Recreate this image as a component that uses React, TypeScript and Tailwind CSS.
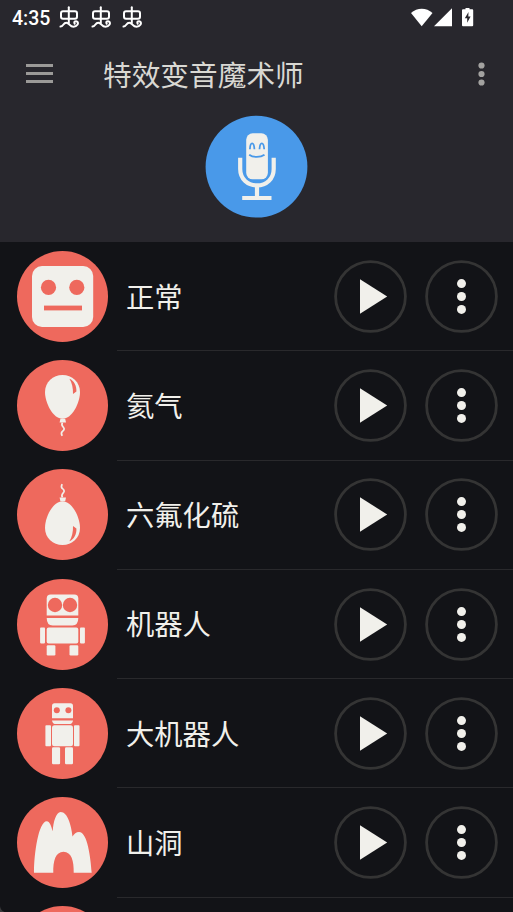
import type { ReactNode } from "react";

const CREAM = "#f1f0eb";
const CORAL = "#ee695d";

function Disc({ children }: { children?: ReactNode }) {
  return (
    <svg viewBox="0 0 91 91" className="mb-[0.5px] h-[91px] w-[91px] shrink-0">
      <circle cx="45.5" cy="45.5" r="45.5" fill={CORAL} />
      <g fill={CREAM}>{children}</g>
    </svg>
  );
}

function Face() {
  return (
    <>
      <rect x="15" y="15" width="61.2" height="61" rx="10" />
      <g fill={CORAL}>
        <circle cx="31.5" cy="36.4" r="7.6" />
        <circle cx="59.8" cy="36.4" r="7.6" />
        <rect x="27" y="54.6" width="38" height="4.8" />
      </g>
    </>
  );
}

function Balloon() {
  return (
    <>
      <path d="M45.5 15C55 15 63 22 63 32C63 43 55 58.8 45.5 58.8C36 58.8 28 43 28 32C28 22 36 15 45.5 15Z" />
      <path d="M52.4 18.8C57 20.5 59.8 26 59.4 31.6L56 34C56.2 28 55 23 52.4 18.8Z" fill={CORAL} />
      <path d="M43.4 58.8H48.2L49 62.6H42.6Z" />
      <path d="M45.4 62.6C44 65 45 65.8 46.4 67.3C48 69.2 46.8 70.4 45.2 71.6C43.8 73 44.2 74 45.2 75.8" fill="none" stroke={CREAM} strokeWidth="1.7" />
    </>
  );
}

function HeavyBalloon() {
  return (
    <g transform="matrix(1 0 0 -1 0 91)">
      <Balloon />
    </g>
  );
}

function Robot() {
  return (
    <>
      <path d="M33.7 15.4H57.3Q61.3 15.4 61.3 19.4V36.4H29.7V19.4Q29.7 15.4 33.7 15.4Z" />
      <circle cx="38" cy="26" r="7.2" fill={CORAL} />
      <circle cx="53" cy="26" r="7.2" fill={CORAL} />
      <path d="M29.7 39H61.3Q61.3 46.4 55.3 46.4H35.7Q29.7 46.4 29.7 39Z" />
      <rect x="29.7" y="48.6" width="31.6" height="16" rx="2" />
      <rect x="23.1" y="48.6" width="4.9" height="15.8" rx="0.8" />
      <rect x="63" y="48.6" width="4.9" height="15.8" rx="0.8" />
      <rect x="29.7" y="66.2" width="8.7" height="10.2" rx="1.2" />
      <rect x="52.5" y="66.2" width="8.8" height="10.2" rx="1.2" />
    </>
  );
}

function BigRobot() {
  return (
    <>
      <path d="M37.5 15.2H53.5Q56 15.2 56 17.7V30.2H35V17.7Q35 15.2 37.5 15.2Z" />
      <circle cx="39.8" cy="22.3" r="3" fill={CORAL} />
      <circle cx="51.4" cy="22.3" r="3" fill={CORAL} />
      <path d="M35 32.4H56Q55.5 36 52 36H39Q35.5 36 35 32.4Z" />
      <rect x="35" y="37.2" width="21" height="21" rx="2.5" />
      <rect x="28.4" y="37.2" width="5.6" height="21" rx="0.9" />
      <rect x="57" y="37.2" width="5.5" height="21" rx="0.9" />
      <rect x="35" y="59.2" width="8.1" height="17" rx="1.2" />
      <rect x="48" y="59.2" width="8" height="17" rx="1.2" />
    </>
  );
}

function Cave() {
  return (
    <path d="M17 75.7C17 57 21.5 24.2 29.8 24.2C32.5 24.2 34.3 29 35.7 34.3C36.3 25 39 15 43.7 15C50.5 15 54.3 28 55.5 39.4C57 37 59.3 35 62 35C70.5 35 73.5 60 74.7 75.7H56.7C57 64 54.5 54.7 46.5 54.7C38.5 54.7 36 64 36.3 75.7Z" />
  );
}

function PlayButton() {
  return (
    <button className="h-[73px] w-[73px] shrink-0">
      <svg viewBox="0 0 73 73" className="block h-full w-full">
        <circle cx="36.5" cy="36.5" r="34.9" fill="none" stroke="#343434" strokeWidth="2.8" />
        <path d="M26 19.2L53.2 36.5L26 53.8Z" fill={CREAM} />
      </svg>
    </button>
  );
}

function MoreButton() {
  return (
    <button className="h-[73px] w-[73px] shrink-0">
      <svg viewBox="0 0 73 73" className="block h-full w-full">
        <circle cx="36.5" cy="36.5" r="34.9" fill="none" stroke="#343434" strokeWidth="2.8" />
        <g fill={CREAM}>
          <circle cx="36.5" cy="23.6" r="4.5" />
          <circle cx="36.5" cy="36.5" r="4.5" />
          <circle cx="36.5" cy="49.4" r="4.5" />
        </g>
      </svg>
    </button>
  );
}

function BugIcon() {
  return (
    <svg viewBox="0 0 20 24" className="h-6 w-5" fill="none" stroke="#fff" strokeWidth="2" strokeLinecap="round">
      <rect x="2" y="5.200" width="16" height="7.600" rx="2" />
      <path d="M9.8 1.2V17" />
      <path d="M1.5 20.6C4.5 20.5 4 16.800 7.3 16.800C10.5 16.800 10.5 20.8 14.5 20.8C18.3 20.8 19.8 17.3 18.3 15.7C17 14.5 14.5 15.6 15.7 17.7" />
    </svg>
  );
}

function MicLogo() {
  return (
    <svg viewBox="0 0 102 102" className="h-[102px] w-[102px] overflow-visible">
      <circle cx="50.5" cy="50.7" r="50.9" fill="#4999e9" />
      <rect x="40.2" y="17.3" width="21.7" height="46" rx="6.5" fill={CREAM} />
      <g fill="none" stroke={CREAM} strokeWidth="4.2">
        <path d="M34.2 41.8V53C34.2 63 41.7 69.4 51 69.4C60.3 69.4 67.7 63 67.7 53V41.8" />
        <path d="M51 69.4V81M36.2 82H65.5" />
      </g>
      <g fill="none" stroke="#4999e9" strokeWidth="1.8">
        <path d="M43.9 33.2C44.2 25.3 48 25.3 48.4 33.2M53.5 33.2C53.9 25.3 57.7 25.3 58.2 33.2" />
        <path d="M43.2 38.7C47 41.6 54.5 41.6 58.5 38.7" />
      </g>
    </svg>
  );
}

const effects: { name: string; art: ReactNode }[] = [
  { name: "正常", art: <Face /> },
  { name: "氦气", art: <Balloon /> },
  { name: "六氟化硫", art: <HeavyBalloon /> },
  { name: "机器人", art: <Robot /> },
  { name: "大机器人", art: <BigRobot /> },
  { name: "山洞", art: <Cave /> },
  { name: "", art: null },
];

export default function App() {
  return (
    <div className="relative flex h-[912px] w-[513px] flex-col overflow-hidden bg-[#121317] font-['Roboto','Noto_Sans_CJK_SC',sans-serif]">
      <header className="h-[242px] shrink-0 bg-[#28272d]">
        <div className="flex h-9 items-center pl-3 pr-[38px] text-white">
          <span className="w-[47px] pt-px text-[19.5px] font-medium leading-9">4:35</span>
          <div className="flex gap-[11.5px]">
            <BugIcon />
            <BugIcon />
            <BugIcon />
          </div>
          <svg viewBox="0 0 64 20" className="mb-px ml-auto h-5 w-16" fill="#fff">
            <path d="M0 5C6 -0.7 15.5 -0.7 21.5 5L10.7 18.2Z" />
            <path d="M23 18.2L41 0.2V18.2Z" />
            <path d="M54.5 -0.3H58.5V1.2H61.2Q62.2 1.2 62.2 2.2V17.2Q62.2 18.2 61.2 18.2H52Q51 18.2 51 17.2V2.2Q51 1.2 52 1.2H54.5Z" />
            <path d="M57.5 4L53.8 10.3H56.2V14.8L59.6 8.5H57.3Z" fill="#28272d" />
          </svg>
        </div>
        <div className="flex h-[76px] items-center pl-[26px] pr-7">
          <div className="mb-px flex w-[27px] flex-col gap-[5px]">
            <div className="h-[3px] bg-[#9b9a98]" />
            <div className="h-[3px] bg-[#9b9a98]" />
            <div className="h-[3px] bg-[#9b9a98]" />
          </div>
          <h1 className="ml-[50px] pt-1 text-[28.7px] leading-none text-[#d9d8d3]">特效变音魔术师</h1>
          <svg viewBox="0 0 7 24" className="ml-auto h-6 w-[7px]" fill="#a3a2a0">
            <circle cx="3.5" cy="3.5" r="3.1" />
            <circle cx="3.5" cy="12" r="3.1" />
            <circle cx="3.5" cy="20.5" r="3.1" />
          </svg>
        </div>
        <div className="mt-[3.5px] flex justify-center">
          <MicLogo />
        </div>
      </header>
      <main className="flex flex-col">
        {effects.map((effect, i) => (
          <div key={i} className="flex h-[109.25px] shrink-0 items-center pl-[17px]">
            <Disc>{effect.art}</Disc>
            <div className="ml-[9px] flex h-full flex-1 items-center border-b border-[#29292c] pl-[9px] pr-[15px] pt-[0.5px]">
              <span className="flex-1 pt-[5px] text-[28.3px] leading-none text-[#f1f0eb]">{effect.name}</span>
              <div className="flex gap-[18px]">
                <PlayButton />
                <MoreButton />
              </div>
            </div>
          </div>
        ))}
      </main>
      <svg viewBox="0 0 6 6" className="absolute bottom-0 left-0 h-1.5 w-1.5">
        <path d="M0 0Q0.5 4.5 4.5 6H0Z" fill="#3a3a3c" />
      </svg>
    </div>
  );
}
